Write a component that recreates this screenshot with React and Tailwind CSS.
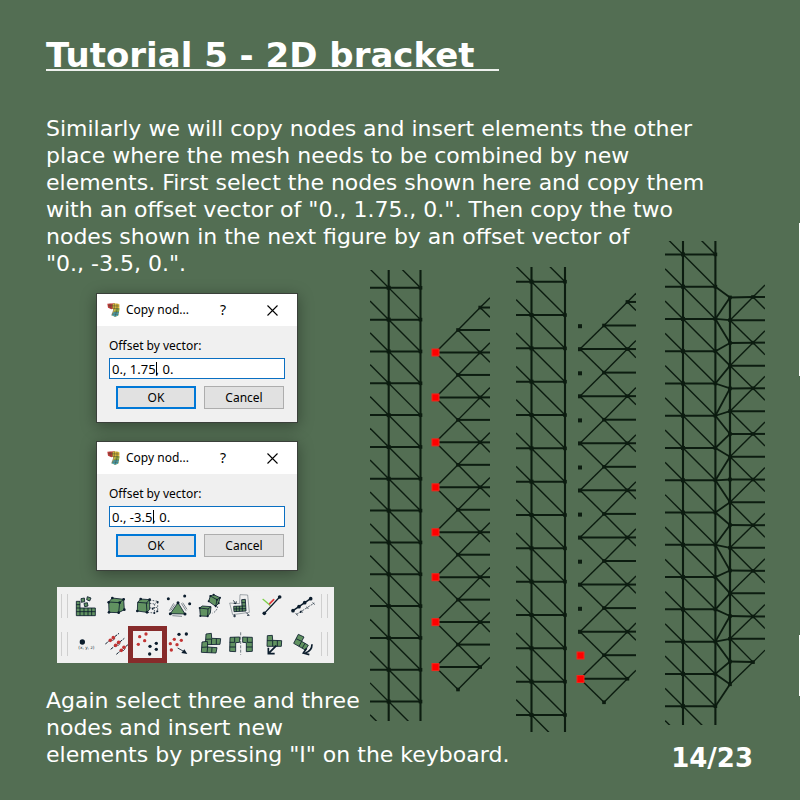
import React from "react";

const INK = "#0c1c10";
const DARK = "#0b1c2c";
const GREEN = "#619261";
const RED = "#c23434";

/* ---------- mesh figures ---------- */

function range(n) {
  return Array.from({ length: n }, (_, i) => i);
}

function Node({ x, y, s = 4 }) {
  return <rect x={x - s / 2} y={y - s / 2} width={s} height={s} fill={INK} />;
}

function RedNode({ x, y }) {
  return <rect x={x - 3.5} y={y - 3.5} width="7" height="7" fill="#ff0000" stroke="#f0281c" strokeWidth="1" />;
}

function Seg({ a, b, w = 1.4 }) {
  return <line x1={a[0]} y1={a[1]} x2={b[0]} y2={b[1]} stroke={INK} strokeWidth={w} />;
}

function Ladder({ x1, x2, top, step, count, height }) {
  const slope = step / (x2 - x1);
  return (
    <g>
      <Seg a={[x1, 0]} b={[x1, height]} w={2.1} />
      <Seg a={[x2, 0]} b={[x2, height]} w={2.1} />
      {range(count + 2).map((i) => {
        const y = top + (i - 1) * step;
        return <Seg key={i} a={[0, y - x1 * slope]} b={[x2, y + step]} />;
      })}
      {range(count).map((i) => {
        const y = top + i * step;
        return (
          <g key={i}>
            <Seg a={[0, y]} b={[x2, y]} w={2} />
            <Node x={x1} y={y} />
            <Node x={x2} y={y} s={3.6} />
          </g>
        );
      })}
    </g>
  );
}

function Fan({ left, mid, right, edge, top, step }) {
  const h = step / 2;
  const ext = edge - right;
  return (
    <g>
      {range(9).map((i) => {
        const y = top + i * step;
        return (
          <g key={i}>
            <Seg a={[mid, y]} b={[right, y - h]} />
            <Seg a={[right, y - h]} b={[edge, y - h - ext]} />
            {i < 8 && (
              <>
                <Seg a={[right, y - h]} b={[edge, y - h + ext]} />
                <Seg a={[right, y - h]} b={[edge, y - h]} w={2} />
                <Seg a={[mid, y]} b={[edge, y]} w={2} />
                <Seg a={[mid, y]} b={[right, y + h]} />
                <Seg a={[left, y + h]} b={[right, y + h]} w={2} />
                <Seg a={[left, y + h]} b={[mid, y]} />
                <Seg a={[left, y + h]} b={[mid, y + step]} />
              </>
            )}
            <Node x={mid} y={y} s={3.6} />
            <Node x={right} y={y - h} s={3.6} />
          </g>
        );
      })}
    </g>
  );
}

function MeshA() {
  return (
    <svg width="120" height="451" viewBox="0 0 120 451" className="mt-[29px] block shrink-0" role="img" aria-label="Mesh with eight selected nodes">
      <Ladder x1={18.7} x2={50.5} top={17.8} step={31.83} count={14} height={451} />
      <Fan left={65.5} mid={88} right={110.2} edge={120} top={60} step={44.94} />
      {range(8).map((i) => (
        <RedNode key={i} x={65.5} y={82.5 + i * 44.94} />
      ))}
    </svg>
  );
}

function MeshB() {
  return (
    <svg width="120" height="465" viewBox="0 0 120 465" className="mt-[26px] block shrink-0" role="img" aria-label="Mesh with two selected nodes">
      <Ladder x1={15.5} x2={49} top={14.7} step={33.33} count={14} height={465} />
      <Fan left={64} mid={88} right={111.4} edge={120} top={58.5} step={47.1} />
      {range(8).map((i) => (
        <g key={i}>
          <Node x={64} y={59.2 + i * 47.1} />
          <Node x={64} y={82.2 + i * 47.1} />
        </g>
      ))}
      <RedNode x={64.5} y={388.5} />
      <RedNode x={64.5} y={412} />
    </svg>
  );
}

const LINKS = [
  [1, 0], [2, 0], [2, 1], [2, 2], [3, 2], [3, 3], [4, 3], [4, 4], [5, 4], [5, 5], [5, 6],
  [6, 6], [6, 7], [7, 7], [7, 8], [7, 9], [8, 9], [8, 10], [9, 10], [9, 11], [9, 12],
  [10, 12], [10, 13], [11, 13], [11, 14], [12, 14], [12, 15], [12, 16], [13, 16], [13, 17], [14, 17],
];

function MeshC() {
  const L = (k) => [50.4, 13.4 + k * 32.27];
  const R = (j) => [65, 56.4 + j * 22.76];
  const Q = (m) => [88, 56 + m * 45.64];
  return (
    <svg width="100" height="484" viewBox="0 0 100 484" className="block shrink-0" role="img" aria-label="Mesh after the elements are inserted">
      <Ladder x1={18} x2={50.4} top={13.4} step={32.27} count={15} height={484} />
      <Seg a={R(0)} b={R(17)} w={2.2} />
      {LINKS.map(([k, j]) => (
        <Seg key={k + "-" + j} a={L(k)} b={R(j)} w={1.8} />
      ))}
      {range(18).map((j) => (
        <g key={j}>
          {j < 16 && j % 2 === 1 && <Seg a={R(j)} b={[100, R(j)[1]]} w={2} />}
          {j % 2 === 0 && <Seg a={R(j)} b={Q(j / 2)} w={2} />}
          {j % 2 === 1 && <Seg a={R(j)} b={Q((j - 1) / 2)} />}
          {j % 2 === 1 && j < 17 && <Seg a={R(j)} b={Q((j + 1) / 2)} />}
          <Node x={R(j)[0]} y={R(j)[1]} s={3.6} />
        </g>
      ))}
      {range(9).map((m) => (
        <g key={m}>
          <Seg a={Q(m)} b={[100, Q(m)[1] - 12]} />
          {m < 8 && <Seg a={Q(m)} b={[100, Q(m)[1] + 12]} />}
          {m < 8 && <Seg a={Q(m)} b={[100, Q(m)[1]]} w={2} />}
          <Node x={Q(m)[0]} y={Q(m)[1]} s={3.6} />
        </g>
      ))}
    </svg>
  );
}

/* ---------- dialogs ---------- */

function AppIcon() {
  return (
    <svg width="13" height="14" viewBox="0 0 39 42" className="block shrink-0" aria-hidden="true">
      <path d="M1 2 L22 1 L22 15 L14 19 L3 14 Z" fill="#c23a3a" />
      <path d="M16 4 L22 1 L37 3 L37 20 L34 38 L24 41 L14 37 L20 22 L16 16 Z" fill="#d9b93c" />
      <path d="M27 15 L37 16 L36 28 L22 27 L25 20 Z" fill="#8fae4a" />
      <path d="M20 27 L36 27 L33 38 L24 41 L14 37 Z" fill="#4aa3b5" />
      <path d="M9 2 L10 17 M3 8 L37 9 M16 3 V17 M22 1 V15 L14 37 M30 2 V20 L24 41 M18 16 L37 18 M20 27 L36 27 M16 33 L34 34" fill="none" stroke="#4b4a32" strokeWidth="1.5" />
    </svg>
  );
}

function CopyDialog({ id, value, caret }) {
  return (
    <section aria-label="Copy nodes" className="w-[202px] border border-[#3a403a] bg-[#f0f0f0] font-['Noto_Sans',sans-serif] text-[12px] leading-4 text-black shadow-[0_3px_14px_rgba(0,0,0,0.35)]">
      <header className="flex h-8 items-center bg-white pr-[17px] pl-[10px]">
        <AppIcon />
        <h2 className="ml-[6px] w-[87px]">Copy nod...</h2>
        <button type="button" aria-label="Help" className="w-[20px] text-[14px]">?</button>
        <button type="button" aria-label="Close" className="ml-auto flex h-4 w-4 items-center justify-center">
          <svg width="11" height="11" viewBox="0 0 11 11" aria-hidden="true">
            <path d="M0.5 0.5 L10.5 10.5 M10.5 0.5 L0.5 10.5" stroke="#000" strokeWidth="1.1" />
          </svg>
        </button>
      </header>
      <div className="px-3 pt-3 pb-[13px]">
        <label htmlFor={id} className="block">Offset by vector:</label>
        <div className="relative mt-1">
          <input id={id} type="text" defaultValue={value} className="block h-[21px] w-full border border-[#0a6fc2] bg-white px-[2px] text-[13px]" />
          <span aria-hidden="true" className={`absolute top-1 h-[13px] w-px bg-black ${caret}`} />
        </div>
        <div className="mt-[7px] flex justify-end gap-2 pr-px">
          <button type="button" className="h-[23px] w-20 border-2 border-[#0078d7] bg-[#e1e1e1]">OK</button>
          <button type="button" className="h-[23px] w-20 border border-[#adadad] bg-[#e1e1e1]">Cancel</button>
        </div>
      </div>
    </section>
  );
}

/* ---------- toolbar ---------- */

function Dots({ pts, r = 4.5, fill = DARK }) {
  return pts.map(([x, y]) => <circle key={x + "," + y} cx={x} cy={y} r={r} fill={fill} />);
}

const solid = { fill: GREEN, stroke: DARK, strokeWidth: 2.5, strokeLinejoin: "round" };
const wire = { fill: "none", stroke: DARK, strokeWidth: 2.5 };

const TOP_ICONS = [
  {
    name: "Refine mesh",
    box: "60 21 93 114",
    art: (
      <g>
        <path {...solid} d="M79 64 H90 V84 H136 V107 H79 Z" />
        <path {...wire} d="M79 74 H90 M79 84 H90 M79 95 H136 M90 84 V107 M102 84 V107 M114 84 V107 M125 84 V107" />
        <path {...solid} d="M93 56 L103 54 L104 65 L94 67 Z M112 50 L123 54 L119 63 L110 59 Z M102 70 L112 68 L114 78 L104 80 Z" />
      </g>
    ),
  },
  {
    name: "Solid",
    box: "153 21 93 114",
    art: (
      <g>
        <path {...solid} d="M176 66 L187 54 L221 58 L223 89 L206 98 L177 97 Z" />
        <path {...wire} d="M176 66 L209 68 L221 58 M209 68 L206 98" />
        <Dots pts={[[187, 54], [221, 58], [176, 67], [209, 68], [223, 89], [206, 98], [177, 97]]} r={4} />
      </g>
    ),
  },
  {
    name: "Extrude",
    box: "246 21 93 114",
    art: (
      <g>
        <path {...solid} d="M263 67 L272 57 L299 59 L299 88 L291 97 L262 93 Z" />
        <path {...wire} d="M263 67 L289 69 L299 59 M289 69 L291 97" />
        <path {...wire} strokeWidth="2" strokeDasharray="5 4" d="M299 60 L323 64 L323 94 L313 99 L291 97 M290 69 L314 72 L323 64 M314 72 L313 99 M299 84 L323 82" />
        <Dots pts={[[272, 57], [299, 59], [262, 93], [291, 97]]} r={4} />
        <Dots pts={[[323, 66], [322, 94], [313, 99], [308, 86]]} r={3} />
      </g>
    ),
  },
  {
    name: "Create face",
    box: "339 21 93 114",
    art: (
      <g>
        <path {...solid} d="M384 68 L405 102 L361 101 Z" />
        <path {...wire} strokeWidth="1.5" d="M371 70 L358 92 M375 73 L362 92 M394 70 L408 92 M398 68 L411 88 M367 107 L396 109" />
        <Dots pts={[[355, 56], [404, 48], [419, 71], [384, 68], [361, 101], [405, 102]]} />
      </g>
    ),
  },
  {
    name: "Copy elements",
    box: "12 21 93 114",
    art: (
      <g>
        <path {...solid} d="M29 84 L37 78 L63 80 L61 99 L53 109 L31 108 Z" />
        <path {...wire} d="M29 84 L54 87 L63 80 M54 87 L53 109" />
        <path {...solid} d="M56 64 L61 48 L71 44 L90 53 L86 70 L77 79 Z" />
        <path {...wire} d="M61 48 L81 59 L90 53 M81 59 L77 79" />
        <path {...wire} strokeDasharray="4 4" d="M83 80 Q80 94 68 99" />
        <Dots pts={[[61, 48], [71, 44], [90, 53], [81, 59], [56, 64], [77, 79], [86, 70], [29, 84], [31, 108], [53, 109]]} r={3} />
      </g>
    ),
  },
  {
    name: "Scale elements",
    box: "105 21 93 114",
    art: (
      <g>
        <path fill="none" stroke="#667078" strokeWidth="1.8" d="M150 44 L173 45 L178 97 L128 104 L119 69 L149 71 Z" />
        <path {...solid} d="M131 79 L156 78 L155 59 L166 58 L168 93 L132 95 Z" />
        <path {...wire} d="M131 87 L168 86 M139 79 V95 M148 78 V94 M157 78 V94 M155 68 H166 M156 78 H167" />
        <path {...wire} d="M134 103 L134 112 M129 108 H138 M169 98 L177 106 M171 106 H178 M130 61 L137 71 M131 70 L138 71 L139 64" />
      </g>
    ),
  },
  {
    name: "Local axes",
    box: "198 21 93 114",
    art: (
      <g fill="none" strokeLinecap="round">
        <path stroke="#7fd04c" strokeWidth="4" d="M219 58 L240 76" />
        <path stroke="#e23b3b" strokeWidth="5" d="M239 71 L251 59" />
        <path stroke={DARK} strokeWidth="4" d="M223 100 L269 51" />
        <Dots pts={[[223, 100], [269, 51]]} r={5.5} />
      </g>
    ),
  },
  {
    name: "Line elements",
    box: "291 21 93 114",
    art: (
      <g>
        <path stroke={DARK} strokeWidth="4.5" d="M309 92 L362 56" />
        <Dots pts={[[309, 92], [327, 80], [344, 68], [362, 56]]} r={5.5} />
        <path stroke={DARK} strokeWidth="2" strokeDasharray="7 3" d="M320 103 L373 69" />
        <path stroke={DARK} strokeWidth="2" d="M317 99 L323 107 M333 91 L338 98 M350 80 L355 87 M368 67 L374 74" />
        <Dots pts={[[332, 96]]} r={3} />
      </g>
    ),
  },
];

const BOTTOM_ICONS = [
  {
    name: "Create node",
    box: "60 135 93 114",
    art: (
      <g>
        <circle cx="97" cy="186" r="8" fill={DARK} />
        <text x="109" y="208" textAnchor="middle" fontSize="13" fill={DARK} fontFamily="DejaVu Sans, sans-serif">(x, y, z)</text>
      </g>
    ),
  },
  {
    name: "Move nodes",
    box: "153 135 93 114",
    art: (
      <g>
        <path stroke={DARK} strokeWidth="3" strokeDasharray="9 3" d="M166 192 L207 160 M182 208 L223 175 M199 223 L240 189" />
        <Dots pts={[[181, 181], [190, 173], [197, 196], [206, 187], [214, 211], [222, 202]]} r={5.5} fill={RED} />
        <path stroke={DARK} strokeWidth="2" d="M187 183 L194 176 M203 198 L210 191 M219 213 L226 206" />
      </g>
    ),
  },
  {
    name: "Copy nodes",
    box: "246 135 93 114",
    selected: true,
    art: (
      <g>
        <Dots pts={[[288, 162], [269, 170], [284, 182], [265, 193]]} r={5} fill={RED} />
        <Dots pts={[[319, 190], [300, 199], [319, 208], [299, 222]]} r={5} />
      </g>
    ),
  },
  {
    name: "Merge nodes",
    box: "339 135 93 114",
    art: (
      <g>
        <Dots pts={[[387, 163], [409, 162]]} r={5} />
        <Dots pts={[[373, 178], [394, 181], [361, 191], [381, 194], [364, 210]]} r={5} fill={RED} />
        <path stroke={DARK} strokeWidth="2.5" d="M383 204 L401 214" />
        <path fill={DARK} d="M412 222 L394 219 L403 208 Z" />
      </g>
    ),
  },
  {
    name: "Move elements",
    box: "12 135 93 114",
    art: (
      <g>
        <path {...solid} d="M48 162 L64 160 L65 175 L92 176 L90 193 L46 194 Z" />
        <path {...wire} d="M47 178 L65 177 L64 194 M79 176 V193" />
        <path {...solid} d="M36 186 L52 184 L53 201 L81 203 L78 219 L34 217 Z" />
        <path {...wire} d="M35 202 L53 201 L51 218 M66 202 L65 218" />
      </g>
    ),
  },
  {
    name: "Mirror elements",
    box: "105 135 93 114",
    art: (
      <g>
        <path {...solid} d="M120 172 L149 171 L149 187 L137 188 L137 215 L119 214 Z" />
        <path {...wire} d="M134 172 V187 H119 M119 201 H137" />
        <path {...solid} d="M187 172 L158 171 L158 187 L169 188 L169 215 L187 214 Z" />
        <path {...wire} d="M172 172 V187 H187 M169 201 H187" />
        <path stroke="#59656e" strokeWidth="2.5" strokeDasharray="9 4" d="M152 157 V224" />
      </g>
    ),
  },
  {
    name: "Translate elements",
    box: "198 135 93 114",
    art: (
      <g>
        <path {...solid} d="M232 167 L247 166 L248 181 L275 182 L274 199 L231 199 Z" />
        <path {...wire} d="M231 182 H248 V199 M262 182 V199" />
        <path fill="none" stroke={DARK} strokeWidth="5" d="M259 197 L238 218 M235 203 V221 H254" />
      </g>
    ),
  },
  {
    name: "Rotate elements",
    box: "291 135 93 114",
    art: (
      <g>
        <path {...solid} d="M325 163 L342 171 L335 184 L355 196 L346 210 L311 190 Z" />
        <path {...wire} d="M318 176 L335 184 L327 199 M345 190 L337 204" />
        <path fill="none" stroke={DARK} strokeWidth="5" d="M366 193 Q366 213 346 219 M350 205 L340 219 L358 224" />
      </g>
    ),
  },
];

function Grip() {
  return <span aria-hidden="true" className="h-6 w-[7px] border-x border-[#cfcfcf]" />;
}

function ToolRow({ icons }) {
  return (
    <div className="flex h-[38px] items-center pr-[6px] pl-1">
      <Grip />
      <div className="mr-auto ml-[2px] flex">
        {icons.map((icon) => (
          <button key={icon.name} type="button" aria-label={icon.name} className="relative block h-[38px] w-[31px]">
            <svg width="31" height="38" viewBox={icon.box} className="block overflow-visible" aria-hidden="true">{icon.art}</svg>
            {icon.selected && <span className="absolute -inset-x-[4px] top-px bottom-0 border-5 border-[#872b2b]" />}
          </button>
        ))}
      </div>
      <Grip />
    </div>
  );
}

/* ---------- page ---------- */

export default function App() {
  return (
    <main className="relative min-h-screen overflow-hidden bg-[#536e53] pt-[41px] pr-[35px] pb-8 pl-[46px] font-['DejaVu_Sans',sans-serif] text-[22px] leading-[27px] text-white">
      <h1 className="w-fit border-b-2 border-[#eef1ee] pr-6 text-[34px] leading-7 font-bold">Tutorial 5 - 2D bracket</h1>
      <p className="mt-11 max-w-[690px]">
        Similarly we will copy nodes and insert elements the other place where the mesh needs to be combined by new
        elements. First select the nodes shown here and copy them with an offset vector of "0., 1.75., 0.". Then copy
        the two nodes shown in the next figure by an offset vector of
        <br />
        "0., -3.5, 0.".
      </p>

      <div className="flex items-start justify-between">
        <div className="mt-4 ml-[11px] w-[277px] shrink-0">
          <div className="ml-[39px] flex flex-col gap-[18px]">
            <CopyDialog id="offset-first" value="0., 1.75, 0." caret="left-[47px]" />
            <CopyDialog id="offset-second" value="0., -3.5, 0." caret="left-[44px]" />
          </div>
          <div role="toolbar" aria-label="Mesh tools" className="mt-4 bg-[#f0f0f0]">
            <ToolRow icons={TOP_ICONS} />
            <ToolRow icons={BOTTOM_ICONS} />
          </div>
        </div>
        <div className="relative -mt-9 flex items-start">
          <MeshA />
          <div className="ml-[26px]"><MeshB /></div>
          <div className="ml-[29px]"><MeshC /></div>
        </div>
      </div>

      <footer className="relative -mt-[45px] flex items-end justify-between pr-3">
        <p>
          Again select three and three
          <br />
          nodes and insert new
          <br />
          elements by pressing "I" on the keyboard.
        </p>
        <p className="text-[26px] leading-5 font-bold">14/23</p>
      </footer>

      <span aria-hidden="true" className="absolute top-[223px] right-0 h-[153px] w-px bg-white" />
      <span aria-hidden="true" className="absolute top-[635px] right-0 h-[61px] w-px bg-white" />
    </main>
  );
}
